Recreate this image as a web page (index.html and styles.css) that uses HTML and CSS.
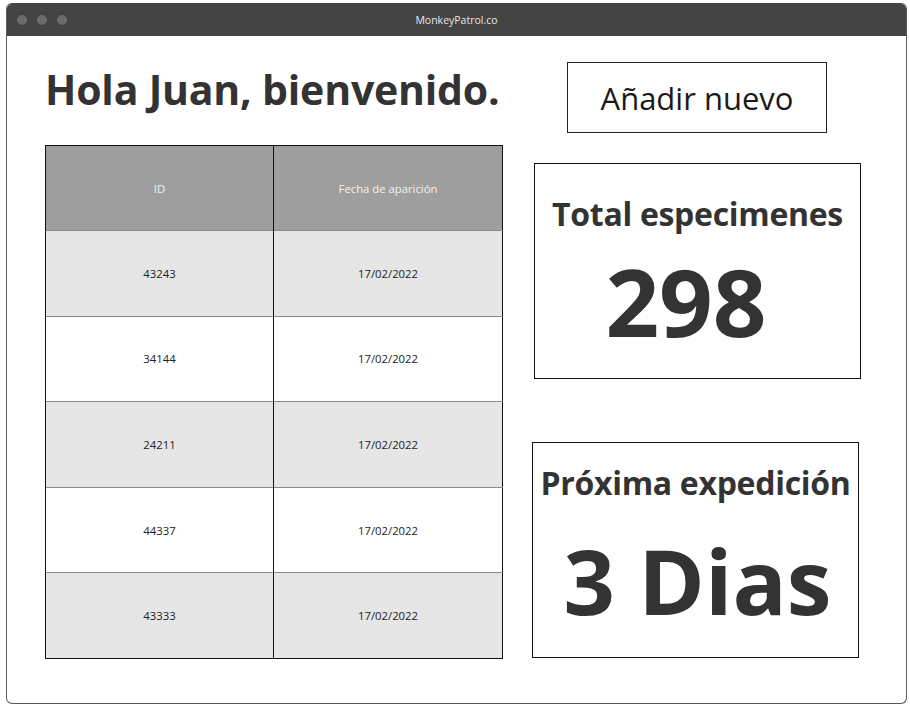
FILE: index.html
```html
<!DOCTYPE html>
<html lang="es">
<head>
<meta charset="utf-8">
<title>MonkeyPatrol.co</title>
<link rel="stylesheet" href="styles.css">
</head>
<body>
<div class="window">
  <div class="titlebar">
    <div class="dots"><span class="dot"></span><span class="dot"></span><span class="dot"></span></div>
    <div class="title">MonkeyPatrol.co</div>
  </div>
  <div class="content">
    <div class="left">
      <h1 class="greeting">Hola Juan, bienvenido.</h1>
      <table class="specimens">
        <colgroup><col class="col-id"><col></colgroup>
        <thead>
          <tr><th>ID</th><th>Fecha de aparición</th></tr>
        </thead>
        <tbody>
          <tr><td>43243</td><td>17/02/2022</td></tr>
          <tr><td>34144</td><td>17/02/2022</td></tr>
          <tr><td>24211</td><td>17/02/2022</td></tr>
          <tr><td>44337</td><td>17/02/2022</td></tr>
          <tr><td>43333</td><td>17/02/2022</td></tr>
        </tbody>
      </table>
    </div>
    <div class="right">
      <button class="add-btn">Añadir nuevo</button>
      <div class="card card-total">
        <div class="card-title">Total especimenes</div>
        <div class="card-value value-total">298</div>
      </div>
      <div class="card card-next">
        <div class="card-title">Próxima expedición</div>
        <div class="card-value value-next">3 Dias</div>
      </div>
    </div>
  </div>
</div>
</body>
</html>
```
FILE: styles.css
```css
* { box-sizing: border-box; }
html, body { margin: 0; padding: 0; background: #ffffff; }
body { font-family: "Open Sans", "Liberation Sans", sans-serif; color: #333333; }

.window {
  margin: 3px 0 0 6px;
  width: 901px;
  height: 701px;
  border: 1px solid #5a5a5a;
  border-top-color: #444444;
  border-radius: 6px;
  overflow: hidden;
  background: #ffffff;
}

.titlebar {
  height: 32px;
  background: #444444;
  display: flex;
  align-items: center;
  position: relative;
}
.dots { display: flex; gap: 10px; padding-left: 10px; }
.dot { width: 10px; height: 10px; border-radius: 50%; background: #6b6b6b; }
.title {
  position: absolute;
  left: 0; right: 0; top: 0; bottom: 0;
  display: flex; align-items: center; justify-content: center;
  color: #e6e6e6;
  font-size: 10.5px;
}

.content {
  display: flex;
  padding-left: 38px;
  gap: 29px;
}

.left { width: 458px; display: flex; flex-direction: column; }
.greeting {
  margin: 0;
  height: 109px;
  padding-top: 29px;
  font-size: 41px;
  font-weight: 700;
  line-height: 48px;
  letter-spacing: -0.2px;
  white-space: nowrap;
}

.specimens {
  width: 458px;
  border-collapse: collapse;
  border: 1px solid #111111;
  table-layout: fixed;
}
.col-id { width: 228px; }
.specimens th, .specimens td {
  height: 85.6px;
  text-align: center;
  font-size: 11.3px;
  padding: 0;
  border-left: 1px solid #111111;
  border-top: 1px solid #8a8a8a;
}
.specimens th { height: 85px; background: #9e9e9e; color: #f2f2f2; font-weight: 400; border-top: 1px solid #111111; }
.specimens td { color: #222222; }
.specimens tbody tr:nth-child(odd) td { background: #e6e6e6; }
.specimens tbody tr:nth-child(even) td { background: #ffffff; }

.right { width: 330px; display: flex; flex-direction: column; }
.add-btn {
  margin: 26px 0 0 35px;
  width: 260px;
  height: 71px;
  border: 1px solid #222222;
  background: #ffffff;
  font-family: "Open Sans", "Liberation Sans", sans-serif;
  font-size: 31px;
  color: #1a1a1a;
  padding: 0;
}

.card {
  width: 327px;
  height: 216px;
  border: 1px solid #111111;
  display: flex;
  flex-direction: column;
  align-items: center;
}
.card-total { margin: 30px 0 0 2px; }
.card-next { margin: 63px 0 0 0; }
.card-title { font-weight: 700; font-size: 32px; white-space: nowrap; letter-spacing: -0.3px; }
.card-value { font-weight: 700; line-height: 1; white-space: nowrap; }
.card-total .card-title { margin-top: 32px; line-height: 36px; }
.value-total { font-size: 94px; margin-top: 22px; margin-right: 23px; }
.card-next .card-title { margin-top: 20px; line-height: 40px; }
.value-next { font-size: 90px; margin-top: 32px; margin-left: 4px; }
```
